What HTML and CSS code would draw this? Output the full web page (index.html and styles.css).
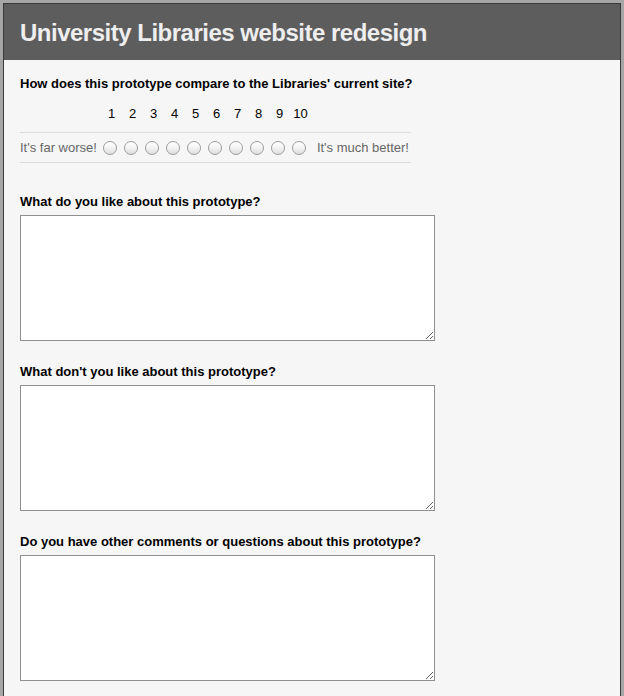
FILE: index.html
```html
<!DOCTYPE html>
<html>
<head>
<meta charset="utf-8">
<title>University Libraries website redesign</title>
<link rel="stylesheet" href="styles.css">
</head>
<body>
<div class="page">
  <header class="header"><h1 class="title">University Libraries website redesign</h1></header>
  <form class="content">
    <div class="question q-scale">
      <label class="qlabel">How does this prototype compare to the Libraries' current site?</label>
      <div class="scale">
        <div class="nums">
          <span class="num">1</span><span class="num">2</span><span class="num">3</span><span class="num">4</span><span class="num">5</span><span class="num">6</span><span class="num">7</span><span class="num">8</span><span class="num">9</span><span class="num">10</span>
        </div>
        <div class="radios">
          <span class="end end-left">It's far worse!</span>
          <input class="radio" type="radio" name="r" value="1">
          <input class="radio" type="radio" name="r" value="2">
          <input class="radio" type="radio" name="r" value="3">
          <input class="radio" type="radio" name="r" value="4">
          <input class="radio" type="radio" name="r" value="5">
          <input class="radio" type="radio" name="r" value="6">
          <input class="radio" type="radio" name="r" value="7">
          <input class="radio" type="radio" name="r" value="8">
          <input class="radio" type="radio" name="r" value="9">
          <input class="radio" type="radio" name="r" value="10">
          <span class="end end-right">It's much better!</span>
        </div>
      </div>
    </div>
    <div class="question">
      <label class="qlabel">What do you like about this prototype?</label>
      <textarea class="box"></textarea>
    </div>
    <div class="question">
      <label class="qlabel">What don't you like about this prototype?</label>
      <textarea class="box"></textarea>
    </div>
    <div class="question">
      <label class="qlabel">Do you have other comments or questions about this prototype?</label>
      <textarea class="box"></textarea>
    </div>
  </form>
</div>
</body>
</html>
```
FILE: styles.css
```css
html, body {
  margin: 0;
  padding: 0;
  height: 100%;
}
body {
  background: #a6a6a6;
  font-family: "Liberation Sans", Arial, Helvetica, sans-serif;
  overflow: hidden;
}
.page {
  margin: 3px 3px 0 3px;
  border: 1px solid #3a3a3a;
  border-bottom: none;
  background: #f6f6f6;
  min-height: 700px;
}
.header {
  background: #5d5d5d;
  height: 56px;
  padding-left: 16px;
  display: flex;
  align-items: center;
}
.title {
  margin: 0;
  font-size: 24px;
  font-weight: bold;
  color: #eeeeee;
  letter-spacing: -0.5px;
  padding-top: 2px;
}
.content {
  padding: 16px 16px 0 16px;
  display: flex;
  flex-direction: column;
}
.question {
  display: flex;
  flex-direction: column;
  margin-bottom: 23px;
}
.q-scale {
  margin-bottom: 31px;
}
.qlabel {
  font-size: 13px;
  line-height: 16px;
  font-weight: bold;
  color: #000;
  margin-bottom: 5px;
}
.q-scale .qlabel {
  margin-bottom: 0;
}
.scale {
  width: 391px;
  margin-top: 14px;
}
.nums {
  display: flex;
  padding-left: 81px;
  height: 16px;
  padding-bottom: 10px;
  border-bottom: 1px solid #dcdcdc;
}
.num {
  width: 21px;
  text-align: center;
  font-size: 13px;
  line-height: 16px;
  color: #000;
}
.radios {
  display: flex;
  align-items: center;
  height: 29px;
  border-bottom: 1px solid #dcdcdc;
  font-size: 13px;
  color: #666;
}
.end-left {
  margin-right: 6px;
}
.end-right {
  margin-left: 4px;
}
.radio {
  -webkit-appearance: none;
  appearance: none;
  width: 14px;
  height: 14px;
  margin: 0 7px 0 0;
  border-radius: 50%;
  border: 1px solid #9c9c9c;
  background: linear-gradient(#ffffff 0%, #f4f4f4 45%, #dedede 100%);
  box-shadow: inset 0 1px 1px rgba(255,255,255,0.9);
  box-sizing: border-box;
}
.box {
  width: 415px;
  height: 126px;
  box-sizing: border-box;
  border: 1px solid #8f8f8f;
  background: #fff;
  margin: 0;
  padding: 2px;
  font-family: "Liberation Sans", Arial, sans-serif;
  font-size: 13px;
}
```
